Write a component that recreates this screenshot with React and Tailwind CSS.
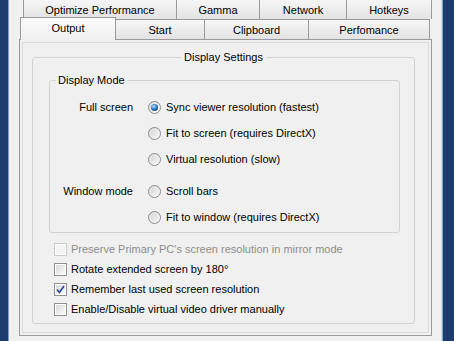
import React from 'react';

const topTabs = [
  { label: 'Optimize Performance', w: 'w-[153px]' },
  { label: 'Gamma', w: 'w-[83px]' },
  { label: 'Network', w: 'w-[87px]' },
  { label: 'Hotkeys', w: 'w-[86px]' },
];

const bottomTabs = [
  { label: 'Start', w: 'w-[89px]' },
  { label: 'Clipboard', w: 'w-[104px]' },
  { label: 'Perfomance', w: 'w-[121px]' },
];

const Radio = ({ checked }) => (
  <svg width="13" height="13" viewBox="0 0 13 13" className="shrink-0">
    <defs>
      <linearGradient id="radioFill" x1="0" y1="0" x2="1" y2="1">
        <stop offset="0" stopColor="#cfcfcf" />
        <stop offset="1" stopColor="#fbfbfb" />
      </linearGradient>
      <radialGradient id="radioDot" cx="0.4" cy="0.35" r="0.7">
        <stop offset="0" stopColor="#bfe4ff" />
        <stop offset="0.5" stopColor="#3b87d3" />
        <stop offset="1" stopColor="#163d78" />
      </radialGradient>
    </defs>
    <circle cx="6.5" cy="6.5" r="6" fill="url(#radioFill)" stroke="#8b8b8b" />
    <circle cx="6.5" cy="6.5" r="4.5" fill="none" stroke="#ffffff" strokeOpacity="0.5" />
    {checked && <circle cx="6.5" cy="6.5" r="3.5" fill="url(#radioDot)" />}
  </svg>
);

const CheckBox = ({ checked, disabled }) => (
  <span
    className={
      disabled
        ? 'flex w-[13px] h-[13px] shrink-0 border border-[#c9c9c9] bg-white p-px'
        : 'flex w-[13px] h-[13px] shrink-0 border border-[#8e8f8f] bg-white p-px'
    }
  >
    <span
      className={
        disabled
          ? 'flex flex-1 bg-[#f3f3f3]'
          : 'flex flex-1 items-center justify-center bg-linear-to-br from-[#d9d9d9] to-[#fafafa]'
      }
    >
      {checked && (
        <svg width="9" height="9" viewBox="0 0 9 9">
          <path d="M1 4.6 L3.4 7.4 L8 1" fill="none" stroke="#22409a" strokeWidth="1.6" />
        </svg>
      )}
    </span>
  </span>
);

const RadioRow = ({ label, text, checked }) => (
  <div className="flex h-[26px] items-center">
    <div className="w-[83px] text-right">{label}</div>
    <div className="ml-[15px] flex items-center gap-[5px]">
      <Radio checked={checked} />
      <span>{text}</span>
    </div>
  </div>
);

const CheckRow = ({ text, checked, disabled }) => (
  <div className="flex h-[20px] items-center gap-[4px]">
    <CheckBox checked={checked} disabled={disabled} />
    <span className={disabled ? 'text-[#8d8d8d]' : ''}>{text}</span>
  </div>
);

export default function App() {
  return (
    <div className="flex w-[454px] h-[341px] overflow-hidden bg-[#1c3b6f] font-['Liberation_Sans',Arial,sans-serif] text-[11px] leading-[14px] text-black">
      <div className="w-[8px] bg-[#1c3b6f]" />
      <div className="w-px bg-[#7d9cc9]" />

      <div className="flex flex-1 flex-col bg-[#f0f0f0] pl-[10px]">
        {/* top row of tabs */}
        <div className="ml-[4px] flex h-[19px]">
          {topTabs.map((t, i) => (
            <div
              key={t.label}
              className={`${t.w} flex items-center justify-center border-l border-[#999a9c] bg-linear-to-b from-[#f6f6f6] to-[#e3e3e3] ${
                i === topTabs.length - 1 ? 'border-r' : ''
              }`}
            >
              {t.label}
            </div>
          ))}
        </div>

        {/* second row of tabs */}
        <div className="relative z-10 -mb-px ml-px flex h-[21px] items-end">
          <div className="flex h-[23px] w-[96px] items-center justify-center border-x border-t border-[#999a9c] bg-linear-to-b from-[#fbfbfb] to-[#f0f0f0] pb-[2px]">
            Output
          </div>
          {bottomTabs.map((t, i) => (
            <div
              key={t.label}
              className={`${t.w} flex h-[21px] items-center justify-center border-y border-r border-[#999a9c] bg-linear-to-b from-[#f6f6f6] to-[#e3e3e3]`}
            >
              {t.label}
            </div>
          ))}
        </div>

        {/* tab page */}
        <div className="w-[413px] border border-[#999a9c] bg-[#f0f0f0] p-[2px]">
          <div className="border border-[#dadada] pb-[8px] pl-[9px] pt-[7px]">
            <fieldset className="w-[383px] rounded-[3px] border border-[#d3d3d3] pb-[4px]">
              <legend className="mx-auto px-[3px]">Display Settings</legend>

              <fieldset className="ml-[16px] mt-[9px] w-[351px] rounded-[3px] border border-[#d3d3d3] pb-[2px]">
                <legend className="ml-[6px] px-[2px]">Display Mode</legend>
                <div className="pt-[7px]">
                  <RadioRow label="Full screen" text="Sync viewer resolution (fastest)" checked />
                  <RadioRow text="Fit to screen (requires DirectX)" />
                  <RadioRow text="Virtual resolution (slow)" />
                </div>
                <div className="mt-[6px]">
                  <RadioRow label="Window mode" text="Scroll bars" />
                  <RadioRow text="Fit to window (requires DirectX)" />
                </div>
              </fieldset>

              <div className="ml-[21px] mt-[6px]">
                <CheckRow text="Preserve Primary PC's screen resolution in mirror mode" disabled />
                <CheckRow text="Rotate extended screen by 180°" />
                <CheckRow text="Remember last used screen resolution" checked />
                <CheckRow text="Enable/Disable virtual video driver manually" />
              </div>
            </fieldset>
          </div>
        </div>
      </div>

      <div className="w-px bg-[#d4dfec]" />
      <div className="w-px bg-[#86a8d6]" />
      <div className="w-[11px] bg-[#1c3b6f]" />
    </div>
  );
}
